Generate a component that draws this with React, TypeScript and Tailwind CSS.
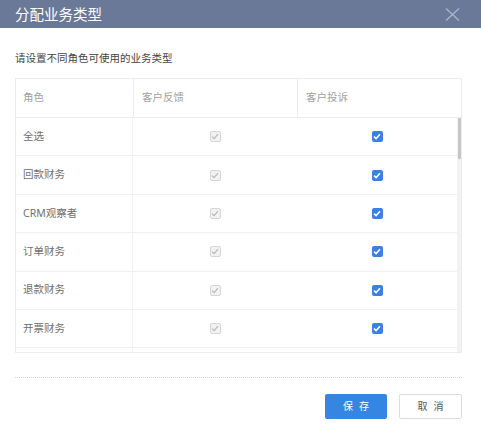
import React from "react";

const rows = ["全选", "回款财务", "CRM观察者", "订单财务", "退款财务", "开票财务", ""];

function DisabledBox() {
  return (
    <span className="w-[11px] h-[11px] rounded-[2px] bg-[#f2f2f2] border border-[#d6d6d6] flex items-center justify-center">
      <svg width="8" height="7" viewBox="0 0 8 7">
        <path d="M1 3.6 L3.1 5.6 L7 1.2" fill="none" stroke="#b5b5b5" strokeWidth="1.1" />
      </svg>
    </span>
  );
}

function CheckedBox() {
  return (
    <span className="w-[11px] h-[11px] rounded-[2px] bg-[#3a80e6] flex items-center justify-center">
      <svg width="8" height="7" viewBox="0 0 8 7">
        <path d="M1 3.6 L3.1 5.6 L7 1.2" fill="none" stroke="#ffffff" strokeWidth="1.5" />
      </svg>
    </span>
  );
}

export default function App() {
  return (
    <div className="w-[481px] h-[433px] bg-white font-['Noto_Sans','Noto_Sans_CJK_SC',sans-serif]">
      <div className="h-[28px] bg-[#6b7999] flex items-center justify-between pl-[15px] pr-[21px]">
        <span className="text-white text-[14.5px] leading-none">分配业务类型</span>
        <svg width="15" height="13" viewBox="0 0 15 13">
          <path d="M1 0.5 L14 12.5 M14 0.5 L1 12.5" stroke="#a9b3ca" strokeWidth="1.4" fill="none" />
        </svg>
      </div>
      <div className="pl-[15px] pr-[19px]">
        <div className="pt-[24px] text-[10.5px] text-[#444] leading-[12px]">请设置不同角色可使用的业务类型</div>
        <div className="mt-[14px] border border-[#ececec]">
          <div className="grid grid-cols-[117px_164px_1fr] h-[39px] border-b border-[#ececec] text-[10.5px] text-[#a0a0a0]">
            <div className="flex items-center pl-[7px]">角色</div>
            <div className="flex items-center pl-[8px] border-l border-[#ececec]">客户反馈</div>
            <div className="flex items-center pl-[8px] border-l border-[#ececec]">客户投诉</div>
          </div>
          <div className="flex h-[234px]">
            <div className="flex-1 overflow-hidden">
              {rows.map((r, i) => (
                <div
                  key={i}
                  className="grid grid-cols-[117px_164px_1fr] h-[38.4px] border-b border-[#f0f0f0] text-[10.5px] text-[#707070]"
                >
                  <div className="flex items-center pl-[7px] border-r border-[#f0f0f0]">{r}</div>
                  <div className="flex items-center justify-center">{r && <DisabledBox />}</div>
                  <div className="flex items-center justify-center">{r && <CheckedBox />}</div>
                </div>
              ))}
            </div>
            <div className="w-[4px] bg-[#f2f2f2] flex flex-col">
              <div className="h-[41px] w-[3px] mx-auto bg-[#c6c6c6] rounded-[1px]"></div>
            </div>
          </div>
        </div>
        <div className="mt-[24px] border-t border-dotted border-[#d8d8d8]"></div>
        <div className="mt-[16px] flex justify-end gap-[12px]">
          <button className="w-[62px] h-[25px] rounded-[2px] bg-[#3586e3] text-white text-[10px] tracking-[6px] pl-[6px] flex items-center justify-center">
            保存
          </button>
          <button className="w-[63px] h-[25px] rounded-[2px] border border-[#dcdcdc] bg-white text-[#555] text-[10px] tracking-[6px] pl-[6px] flex items-center justify-center">
            取消
          </button>
        </div>
      </div>
    </div>
  );
}
